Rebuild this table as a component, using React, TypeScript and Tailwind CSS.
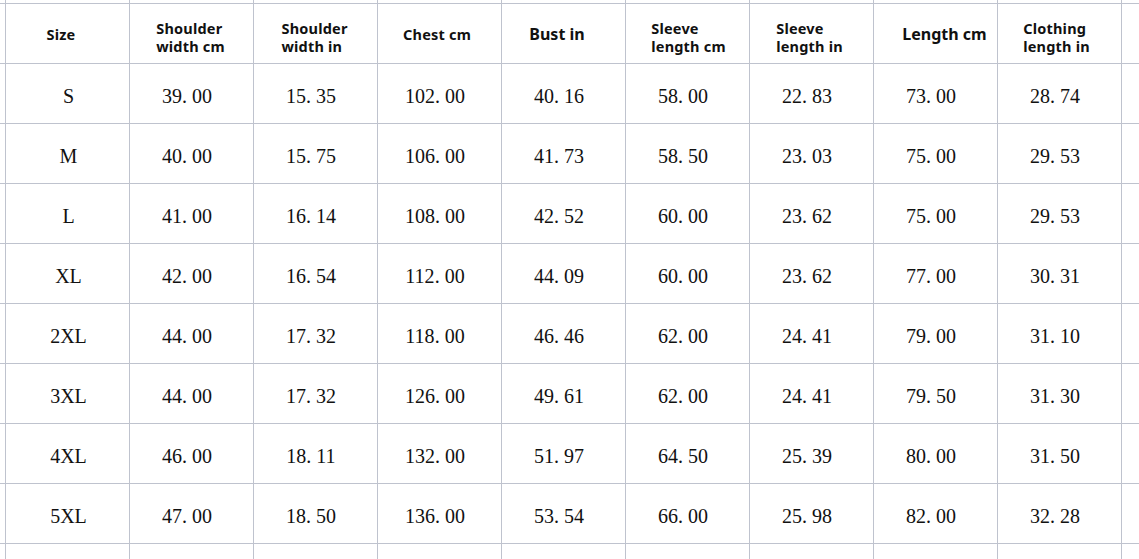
import React from 'react';

interface Header {
  lines: string[];
  big?: boolean;
  pad: string;
}

const headers: Header[] = [
  { lines: ['Size'], pad: 'pr-[13px]' },
  { lines: ['Shoulder', 'width cm'], pad: 'pr-[2px] pt-[7px]' },
  { lines: ['Shoulder', 'width in'], pad: 'pr-[2px] pt-[7px]' },
  { lines: ['Chest cm'], pad: 'pr-[5px]' },
  { lines: ['Bust in'], big: true, pad: 'pr-[13px]' },
  { lines: ['Sleeve', 'length cm'], pad: 'pl-[2px] pt-[6px]' },
  { lines: ['Sleeve', 'length in'], pad: 'pr-[4px] pt-[6px]' },
  { lines: ['Length cm'], big: true, pad: 'pl-[18px]' },
  { lines: ['Clothing', 'length in'], pad: 'pr-[6px] pt-[6px]' },
];

const rows: string[][] = [
  ['S', '39.00', '15.35', '102.00', '40.16', '58.00', '22.83', '73.00', '28.74'],
  ['M', '40.00', '15.75', '106.00', '41.73', '58.50', '23.03', '75.00', '29.53'],
  ['L', '41.00', '16.14', '108.00', '42.52', '60.00', '23.62', '75.00', '29.53'],
  ['XL', '42.00', '16.54', '112.00', '44.09', '60.00', '23.62', '77.00', '30.31'],
  ['2XL', '44.00', '17.32', '118.00', '46.46', '62.00', '24.41', '79.00', '31.10'],
  ['3XL', '44.00', '17.32', '126.00', '49.61', '62.00', '24.41', '79.50', '31.30'],
  ['4XL', '46.00', '18.11', '132.00', '51.97', '64.50', '25.39', '80.00', '31.50'],
  ['5XL', '47.00', '18.50', '136.00', '53.54', '66.00', '25.98', '82.00', '32.28'],
];

// SimSun-style number: the period takes a half-width cell
const Num: React.FC<{ value: string }> = ({ value }) => {
  const [a, b] = value.split('.');
  if (b === undefined) return <>{value}</>;
  return (
    <>
      {a}
      <span className="inline-block w-[10px] text-left">.</span>
      {b}
    </>
  );
};

const Blank = () => <div className="bg-white" />;

export default function App() {
  return (
    <div className="w-[1139px] h-[559px] overflow-hidden bg-white">
      <div className="grid h-full gap-px bg-[#bfc3ce] grid-cols-[5px_repeat(9,123px)_1fr] grid-rows-[3px_repeat(9,59px)_1fr]">
        {/* top partial row */}
        {Array.from({ length: 11 }).map((_, i) => <Blank key={`t${i}`} />)}

        {/* header row */}
        <Blank />
        {headers.map((h, i) => (
          <div
            key={`h${i}`}
            className={`bg-white flex items-center justify-center text-[#111] font-bold font-['Noto_Sans',sans-serif] ${h.pad}`}
          >
            <div className={`text-left ${h.big ? 'text-[16px] leading-[20px]' : 'text-[14.5px] leading-[18px] tracking-[0.2px]'}`}>
              {h.lines.map(l => (
                <div key={l}>{l}</div>
              ))}
            </div>
          </div>
        ))}
        <Blank />

        {/* data rows */}
        {rows.map((r, ri) => (
          <React.Fragment key={`r${ri}`}>
            <Blank />
            {r.map((v, ci) => (
              <div
                key={`c${ri}-${ci}`}
                className={`bg-white flex items-center justify-center pt-[4px] text-[20px] text-[#111] font-['Liberation_Serif',serif] ${ci === 0 ? 'pl-[2px]' : 'pr-[9px]'}`}
              >
                <span><Num value={v} /></span>
              </div>
            ))}
            <Blank />
          </React.Fragment>
        ))}

        {/* bottom partial row */}
        {Array.from({ length: 11 }).map((_, i) => <Blank key={`b${i}`} />)}
      </div>
    </div>
  );
}
